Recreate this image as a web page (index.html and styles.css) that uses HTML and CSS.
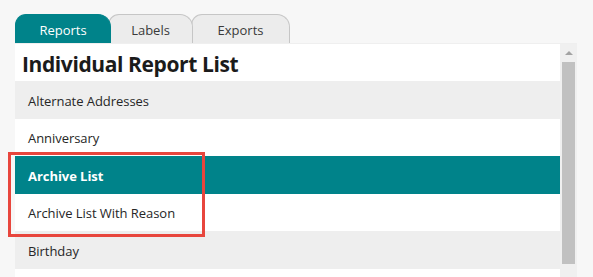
FILE: index.html
```html
<!DOCTYPE html>
<html>
<head>
<meta charset="utf-8">
<link rel="stylesheet" href="styles.css">
</head>
<body>
<div class="page">
  <div class="tabs">
    <div class="tab tab-active">Reports</div>
    <div class="tab tab-labels">Labels</div>
    <div class="tab tab-exports">Exports</div>
  </div>
  <div class="panel">
    <div class="list">
      <h1 class="title">Individual Report List</h1>
      <div class="row row-alt">Alternate Addresses</div>
      <div class="row">Anniversary</div>
      <div class="row row-selected">Archive List</div>
      <div class="row">Archive List With Reason</div>
      <div class="row row-alt">Birthday</div>
    </div>
    <div class="scrollbar">
      <div class="scroll-up"></div>
      <div class="scroll-thumb"></div>
    </div>
  </div>
  <div class="highlight"></div>
</div>
</body>
</html>
```
FILE: styles.css
```css
html, body {
  margin: 0;
  padding: 0;
  background: #f7f7f7;
  font-family: "Open Sans", "Noto Sans", sans-serif;
  overflow: hidden;
}
.page {
  position: relative;
  padding: 14px 0 0 15px;
  height: 263px;
}
.tabs {
  display: flex;
  height: 29px;
}
.tab {
  box-sizing: border-box;
  height: 29px;
  border: 1px solid #c6c6c6;
  border-bottom: none;
  border-radius: 11px 13px 0 0;
  background: #ececec;
  color: #3a3a3a;
  font-size: 13px;
  display: flex;
  align-items: center;
  justify-content: center;
  padding-top: 1px;
}
.tab-active {
  width: 96px;
  background: #00838a;
  border-color: #00838a;
  color: #ffffff;
  position: relative;
  z-index: 2;
}
.tab-labels {
  width: 85px;
  margin-left: -3px;
  position: relative;
  z-index: 1;
}
.tab-exports {
  width: 99px;
  margin-left: -2px;
}
.panel {
  display: flex;
  width: 562px;
  height: 234px;
  border-top: 1px solid #efefef;
  box-sizing: border-box;
}
.list {
  flex: 1;
  background: #ffffff;
  overflow: hidden;
}
.title {
  margin: 0;
  height: 37px;
  padding-left: 7px;
  font-size: 21px;
  letter-spacing: -0.4px;
  font-weight: 700;
  color: #1b1b1b;
  line-height: 40px;
}
.row {
  box-sizing: border-box;
  height: 37.5px;
  line-height: 35px;
  padding-top: 2.5px;
  padding-left: 13px;
  font-size: 13px;
  letter-spacing: -0.05px;
  color: #262626;
  background: #ffffff;
}
.row-alt {
  background: #eeeeee;
}
.row-selected {
  background: #00838a;
  color: #ffffff;
  font-weight: 700;
}
.scrollbar {
  width: 17px;
  background: #f0f0f0;
  display: flex;
  flex-direction: column;
  align-items: center;
}
.scroll-up {
  width: 0;
  height: 0;
  margin-top: 7px;
  border-left: 4px solid transparent;
  border-right: 4px solid transparent;
  border-bottom: 4px solid #a3a3a3;
}
.scroll-thumb {
  margin-top: 7px;
  width: 13px;
  height: 202px;
  background: #c1c1c1;
}
.highlight {
  position: absolute;
  left: 8px;
  top: 152px;
  width: 191px;
  height: 79px;
  border: 3px solid #e8463d;
}
```
